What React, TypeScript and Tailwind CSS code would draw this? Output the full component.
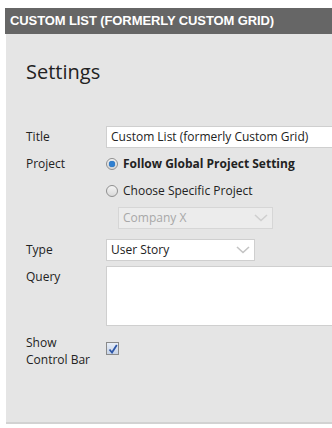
import React from "react";

const font = { fontFamily: '"Open Sans", "Noto Sans", sans-serif' };

function Chevron({ className }: { className?: string }) {
  return (
    <svg width="14" height="8" viewBox="0 0 14 8" className={className}>
      <polyline points="1,1 7,6.5 13,1" fill="none" stroke="currentColor" strokeWidth="1.6" />
    </svg>
  );
}

function Radio({ checked }: { checked?: boolean }) {
  return (
    <span className="w-[12px] h-[12px] rounded-full border border-[#8f8f8f] bg-gradient-to-b from-[#f4f4f4] to-[#d9d9d9] flex items-center justify-center shrink-0">
      {checked && <span className="w-[6px] h-[6px] rounded-full bg-[#2f7fd0] shadow-[0_0_1px_#1a4f8a]" />}
    </span>
  );
}

export default function App() {
  return (
    <div className="w-[332px] h-[428px] bg-white pt-[8px] overflow-hidden text-[#222]" style={font}>
      <div className="ml-[5px] h-[26px] bg-[#666666] flex items-center pl-[5px]">
        <span className="text-white font-bold text-[13px] tracking-[-0.1px] whitespace-nowrap" style={{ fontFamily: '"Liberation Sans", Arial, sans-serif' }}>
          CUSTOM LIST (FORMERLY CUSTOM GRID)
        </span>
      </div>
      <div className="ml-[6px] h-[390px] bg-[#e5e5e5] border-b-[2px] border-[#d2d2d2] pl-[20px] pt-[24px]">
        <h1 className="text-[20px] leading-[27px] text-[#222]">Settings</h1>

        <div className="mt-[41px] grid grid-cols-[80px_1fr] text-[12px] items-start">
          {/* Title */}
          <div className="h-[22px] flex items-center">Title</div>
          <div className="h-[22px] bg-white border border-[#cfcfcf] border-r-0 flex items-center pl-[4px] whitespace-nowrap">
            Custom List (formerly Custom Grid)
          </div>

          {/* Project */}
          <div className="h-[18px] mt-[7px] flex items-center">Project</div>
          <div className="mt-[7px] flex flex-col">
            <div className="h-[18px] flex items-center gap-[5px]">
              <Radio checked />
              <span className="font-bold">Follow Global Project Setting</span>
            </div>
            <div className="h-[18px] mt-[9px] flex items-center gap-[5px]">
              <Radio />
              <span>Choose Specific Project</span>
            </div>
            <div className="ml-[12px] mt-[7px] w-[155px] h-[22px] bg-[#ececec] border border-[#d6d6d6] flex items-center justify-between pl-[4px] pr-[4px] text-[#a8a8a8]">
              <span>Company X</span>
              <Chevron className="text-[#cfcfcf]" />
            </div>
          </div>

          {/* Type */}
          <div className="h-[22px] mt-[10px] flex items-center">Type</div>
          <div className="mt-[10px] w-[149px] h-[22px] bg-white border border-[#cfcfcf] flex items-center justify-between pl-[4px] pr-[4px]">
            <span>User Story</span>
            <Chevron className="text-[#c4c4c4]" />
          </div>

          {/* Query */}
          <div className="mt-[5px] leading-[22px]">Query</div>
          <div className="mt-[5px] h-[60px] bg-white border border-[#cfcfcf] border-r-0" />

          {/* Show Control Bar */}
          <div className="mt-[8px] leading-[17px]">
            Show
            <br />
            Control Bar
          </div>
          <div className="mt-[16px]">
            <span className="w-[13px] h-[13px] border border-[#8a8a8a] bg-gradient-to-b from-[#e8eef8] to-[#c7d3e6] flex items-center justify-center">
              <svg width="10" height="10" viewBox="0 0 10 10">
                <polyline points="1.5,5.5 4,8.5 8.8,1" fill="none" stroke="#2d56a8" strokeWidth="1.8" />
              </svg>
            </span>
          </div>
        </div>
      </div>
    </div>
  );
}
